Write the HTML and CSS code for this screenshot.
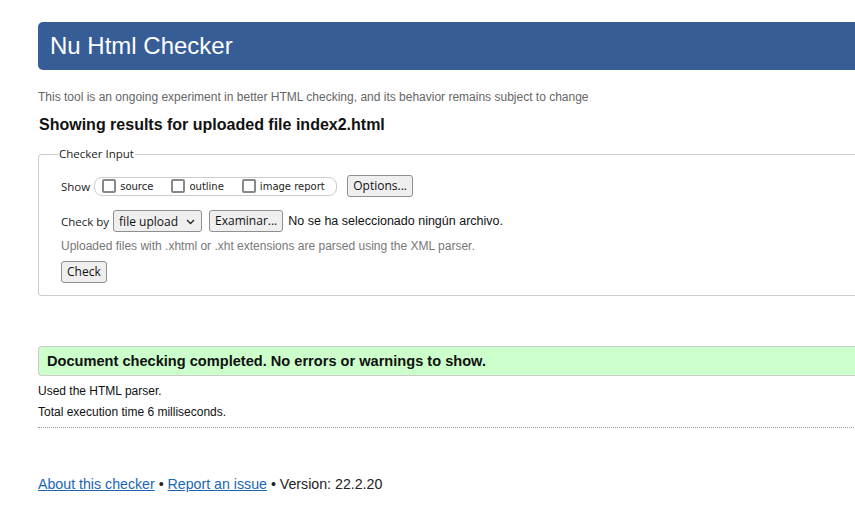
FILE: index.html
```html
<!DOCTYPE html>
<html lang="en">
<head>
<meta charset="utf-8">
<title>Showing results for uploaded file index2.html - Nu Html Checker</title>
<link rel="stylesheet" href="styles.css">
</head>
<body>
<div class="page">
  <h1 class="banner">Nu Html Checker</h1>
  <p class="tagline">This tool is an ongoing experiment in better HTML checking, and its behavior remains subject to change</p>
  <h2 class="results-title">Showing results for uploaded file index2.html</h2>

  <form class="checker-form">
    <fieldset class="checker-input">
      <legend class="legend">Checker Input</legend>
      <div class="row show-row">
        <span class="label">Show</span>
        <span class="show-group">
          <label class="opt"><span class="box"></span>source</label>
          <label class="opt"><span class="box"></span>outline</label>
          <label class="opt"><span class="box"></span>image report</label>
        </span>
        <button type="button" class="btn">Options...</button>
      </div>
      <div class="row checkby-row">
        <span class="label">Check by</span>
        <span class="select">file upload
          <svg class="chev" width="9" height="6" viewBox="0 0 9 6"><path d="M1 1l3.5 3.5 3.5-3.5" fill="none" stroke="#222" stroke-width="1.3"/></svg>
        </span>
        <button type="button" class="btn file-btn">Examinar...</button>
        <span class="file-name">No se ha seleccionado ningún archivo.</span>
      </div>
      <p class="hint">Uploaded files with .xhtml or .xht extensions are parsed using the XML parser.</p>
      <div class="row check-row">
        <button type="button" class="btn">Check</button>
      </div>
    </fieldset>
  </form>

  <p class="success">Document checking completed. No errors or warnings to show.</p>
  <p class="details">Used the HTML parser.</p>
  <p class="details">Total execution time 6 milliseconds.</p>
  <hr class="dotted">

  <p class="footer"><a href="#">About this checker</a> • <a href="#">Report an issue</a> • Version: 22.2.20</p>
</div>
</body>
</html>
```

FILE: styles.css
```css
html, body {
  margin: 0;
  padding: 0;
  overflow: hidden;
  background: #fff;
}
body {
  font-family: "Liberation Sans", Arial, sans-serif;
  color: #111;
  width: 855px;
  height: 520px;
}
.page {
  padding: 22px 0 0 38px;
  width: 1000px;
}
.banner {
  margin: 0;
  height: 48px;
  box-sizing: border-box;
  background: #365d95;
  color: #fff;
  font-weight: normal;
  font-size: 24px;
  line-height: 48px;
  padding-left: 12px;
  border-radius: 5px 0 0 5px;
}
.tagline {
  margin: 20px 0 0 0;
  font-size: 12px;
  color: #666;
  line-height: 14px;
}
.results-title {
  margin: 11px 0 0 1px;
  font-size: 16px;
  line-height: 20px;
  color: #111;
}
.checker-form {
  margin: 12px 0 0 0;
}
.checker-input {
  margin: 0;
  border: 1px solid #ccc;
  border-right: none;
  border-radius: 4px 0 0 4px;
  padding: 6px 0 12px 22px;
}
.legend {
  font-family: "Open Sans", "Noto Sans", sans-serif;
  font-size: 11.5px;
  color: #222;
  padding: 0 1px;
  margin-left: -3px;
  line-height: 14px;
}
.row {
  display: flex;
  align-items: center;
}
.label {
  font-family: "Open Sans", "Noto Sans", sans-serif;
  font-size: 11.5px;
  color: #222;
  margin-right: 4px;
}
.show-row {
  margin-top: 8px;
}
.show-group {
  display: inline-flex;
  align-items: center;
  border: 1px solid #ccc;
  border-radius: 8px;
  height: 17px;
  padding: 0 8px 0 7px;
  margin-right: 10px;
  width: 226px;
  box-sizing: content-box;
}
.opt {
  display: inline-flex;
  align-items: center;
  font-family: "DejaVu Sans", "Open Sans", sans-serif;
  font-size: 10px;
  color: #222;
  margin-right: 18px;
}
.opt:last-child {
  margin-right: 0;
}
.box {
  width: 10px;
  height: 10px;
  border: 2px solid #888;
  border-radius: 2px;
  margin-right: 4px;
  display: inline-block;
  background: #fff;
}
.btn {
  font-family: "Open Sans", "Noto Sans", sans-serif;
  font-size: 12px;
  color: #111;
  background: #efefef;
  border: 1px solid #8f8f8f;
  border-radius: 3px;
  height: 22px;
  padding: 0 5px;
  line-height: 18px;
}
.checkby-row {
  margin-top: 13px;
}
.select {
  position: relative;
  display: inline-flex;
  align-items: center;
  font-family: "Open Sans", "Noto Sans", sans-serif;
  font-size: 12px;
  color: #111;
  background: #efefef;
  border: 1px solid #8f8f8f;
  border-radius: 3px;
  height: 22px;
  box-sizing: border-box;
  width: 89px;
  padding: 0 0 0 5px;
  margin-right: 7px;
}
.chev {
  position: absolute;
  right: 6px;
  top: 8px;
}
.file-btn {
  margin-right: 5px;
}
.file-name {
  font-size: 12.5px;
  color: #111;
}
.hint {
  margin: 7px 0 0 0;
  font-size: 12px;
  color: #777;
  line-height: 14px;
}
.check-row {
  margin-top: 8px;
}
.success {
  margin: 50px 0 0 0;
  background: #ccffcc;
  border: 1px solid #ccc;
  border-right: none;
  border-radius: 4px 0 0 4px;
  height: 30px;
  box-sizing: border-box;
  line-height: 28px;
  padding-left: 8px;
  font-weight: bold;
  font-size: 14.6px;
  color: #111;
}
.details {
  margin: 8px 0 0 0;
  font-size: 12px;
  line-height: 15px;
  color: #111;
}
.details + .details {
  margin-top: 6px;
}
.dotted {
  margin: 7px 0 0 0;
  border: none;
  border-top: 1px dotted #999;
  height: 0;
}
.footer {
  margin: 48px 0 0 0;
  font-size: 14.2px;
  line-height: 16px;
  color: #222;
}
.footer a {
  color: #1a66b3;
  text-decoration: underline;
}
```
